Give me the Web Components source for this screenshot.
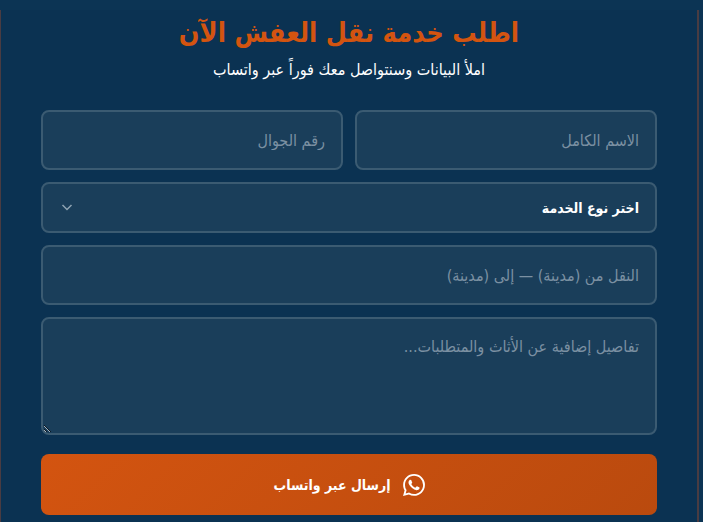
<!DOCTYPE html>
<html lang="ar" dir="rtl">
<head>
<meta charset="utf-8">
<meta name="viewport" content="width=device-width, initial-scale=1">
<title>اطلب خدمة نقل العفش</title>
<style>
    body {
        margin: 0;
        background: #0c3454;
        color: #fff;
        font-family: "DejaVu Sans Condensed", "DejaVu Sans", sans-serif;
        --field: #1a3e5a;
        --line: #3b5b72;
        --hint: #7b90a2;
        --accent: #d35410;
    }
</style>
</head>
<body>
<order-card>
    <span slot="title">اطلب خدمة نقل العفش الآن</span>
    <span slot="lead">املأ البيانات وسنتواصل معك فوراً عبر واتساب</span>
    <field-row>
        <text-field label="الاسم الكامل"></text-field>
        <text-field label="رقم الجوال" type="tel"></text-field>
    </field-row>
    <select-field label="اختر نوع الخدمة"></select-field>
    <text-field label="النقل من (مدينة) — إلى (مدينة)"></text-field>
    <area-field label="تفاصيل إضافية عن الأثاث والمتطلبات..."></area-field>
    <send-button>إرسال عبر واتساب</send-button>
</order-card>

<script>
// estilos comunes de los campos
const fieldStyles = `
    :host {
        display: block;
        min-width: 0;
    }
    input, select, textarea {
        display: block;
        box-sizing: border-box;
        width: 100%;
        margin: 0;
        padding: 0 16px;
        border: 2px solid var(--line);
        border-radius: 8px;
        background: var(--field);
        color: #fff;
        font-family: inherit;
        font-size: 16px;
        line-height: 28px;
        direction: rtl;
        text-align: right;
        outline: none;
    }
    ::placeholder {
        color: var(--hint);
        opacity: 1;
    }
    input:focus, select:focus, textarea:focus {
        border-color: var(--accent);
    }
`

class OrderCard extends HTMLElement {
    constructor() {
        super()
        this.attachShadow({ mode: "open" })
    }

    connectedCallback() {
        this.shadowRoot.innerHTML = `
            <style>
                :host {
                    display: block;
                    padding: 10px 4px 0 0;
                }
                section {
                    padding: 0 40px 7px;
                    border: solid #4a3c42;
                    border-width: 0 2px 0 1px;
                    background: #0b3252;
                }
                h2, p {
                    margin: 0;
                    text-align: center;
                }
                h2 {
                    color: var(--accent);
                    font-size: 27px;
                    font-weight: 700;
                    line-height: 46px;
                }
                p {
                    font-size: 16px;
                    line-height: 28px;
                }
                form {
                    display: flex;
                    flex-direction: column;
                    gap: 12px;
                    margin-top: 26px;
                }
            </style>
            <section>
                <h2><slot name="title"></slot></h2>
                <p><slot name="lead"></slot></p>
                <form><slot></slot></form>
            </section>
        `
    }
}

class FieldRow extends HTMLElement {
    constructor() {
        super()
        this.attachShadow({ mode: "open" })
    }

    connectedCallback() {
        this.shadowRoot.innerHTML = `
            <style>
                :host {
                    display: grid;
                    grid-template-columns: 1fr 1fr;
                    gap: 12px;
                }
            </style>
            <slot></slot>
        `
    }
}

class TextField extends HTMLElement {
    constructor() {
        super()
        this.attachShadow({ mode: "open" })
    }

    connectedCallback() {
        const label = this.getAttribute("label")
        const type = this.getAttribute("type") ?? "text"

        this.shadowRoot.innerHTML = `
            <style>
                ${fieldStyles}
                input { height: 60px; }
            </style>
            <input type="${type}" placeholder="${label}" aria-label="${label}">
        `
    }
}

class SelectField extends HTMLElement {
    constructor() {
        super()
        this.attachShadow({ mode: "open" })
    }

    connectedCallback() {
        const label = this.getAttribute("label")

        this.shadowRoot.innerHTML = `
            <style>
                ${fieldStyles}
                div {
                    display: grid;
                    align-items: center;
                }
                select, svg { grid-area: 1 / 1; }
                select {
                    height: 51px;
                    font-size: 14px;
                    font-weight: 600;
                    appearance: none;
                }
                option { background: var(--field); }
                svg {
                    justify-self: end;
                    margin-inline-end: 20px;
                    pointer-events: none;
                }
            </style>
            <div>
                <select aria-label="${label}">
                    <option>${label}</option>
                </select>
                <svg width="12" height="12" viewBox="0 0 12 12" fill="none" stroke="#8fa3b2" stroke-width="1.5" aria-hidden="true">
                    <path d="M1.5 3 6 7.500l4.500-4.500"/>
                </svg>
            </div>
        `
    }
}

class AreaField extends HTMLElement {
    constructor() {
        super()
        this.attachShadow({ mode: "open" })
    }

    connectedCallback() {
        const label = this.getAttribute("label")

        this.shadowRoot.innerHTML = `
            <style>
                ${fieldStyles}
                textarea {
                    height: 118px;
                    padding-top: 14px;
                    resize: vertical;
                }
            </style>
            <textarea placeholder="${label}" aria-label="${label}"></textarea>
        `
    }
}

class SendButton extends HTMLElement {
    constructor() {
        super()
        this.attachShadow({ mode: "open" })
    }

    connectedCallback() {
        this.shadowRoot.innerHTML = `
            <style>
                :host {
                    display: block;
                    margin-top: 7px;
                }
                button {
                    display: flex;
                    align-items: center;
                    justify-content: center;
                    gap: 12px;
                    width: 100%;
                    height: 61px;
                    border: 0;
                    border-radius: 8px;
                    background: linear-gradient(135deg, #d35410, #ba4a0e);
                    color: #fff;
                    font-family: inherit;
                    font-size: 14px;
                    font-weight: 700;
                    cursor: pointer;
                }
            </style>
            <button type="button">
                <svg width="22" height="22" viewBox="0 0 24 24" fill="#fff" aria-hidden="true">
                    <path d="M17.472 14.382c-.297-.149-1.758-.867-2.030-.967-.273-.099-.471-.148-.670.150-.197.297-.767.966-.940 1.164-.173.199-.347.223-.644.075-.297-.150-1.255-.463-2.390-1.475-.883-.788-1.480-1.761-1.653-2.059-.173-.297-.018-.458.130-.606.134-.133.298-.347.446-.520.149-.174.198-.298.298-.497.099-.198.050-.371-.025-.520-.075-.149-.669-1.612-.916-2.207-.242-.579-.487-.500-.669-.510-.173-.008-.371-.010-.570-.010-.198 0-.520.074-.792.372-.272.297-1.040 1.016-1.040 2.479 0 1.462 1.065 2.875 1.213 3.074.149.198 2.096 3.200 5.077 4.487.709.306 1.262.489 1.694.625.712.227 1.360.195 1.871.118.571-.085 1.758-.719 2.006-1.413.248-.694.248-1.289.173-1.413-.074-.124-.272-.198-.570-.347m-5.421 7.403h-.004a9.870 9.870 0 0 1-5.031-1.378l-.361-.214-3.741.982.998-3.648-.235-.374a9.860 9.860 0 0 1-1.510-5.260c.001-5.450 4.436-9.884 9.888-9.884 2.640 0 5.122 1.030 6.988 2.898a9.825 9.825 0 0 1 2.893 6.994c-.003 5.450-4.437 9.884-9.885 9.884m8.413-18.297A11.815 11.815 0 0 0 12.050 0C5.495 0 .160 5.335.157 11.892c0 2.096.547 4.142 1.588 5.945L.057 24l6.305-1.654a11.882 11.882 0 0 0 5.683 1.448h.005c6.554 0 11.890-5.335 11.893-11.893a11.821 11.821 0 0 0-3.480-8.413z"/>
                </svg>
                <slot></slot>
            </button>
        `
    }
}

customElements.define("order-card", OrderCard)
customElements.define("field-row", FieldRow)
customElements.define("text-field", TextField)
customElements.define("select-field", SelectField)
customElements.define("area-field", AreaField)
customElements.define("send-button", SendButton)
</script>
</body>
</html>
